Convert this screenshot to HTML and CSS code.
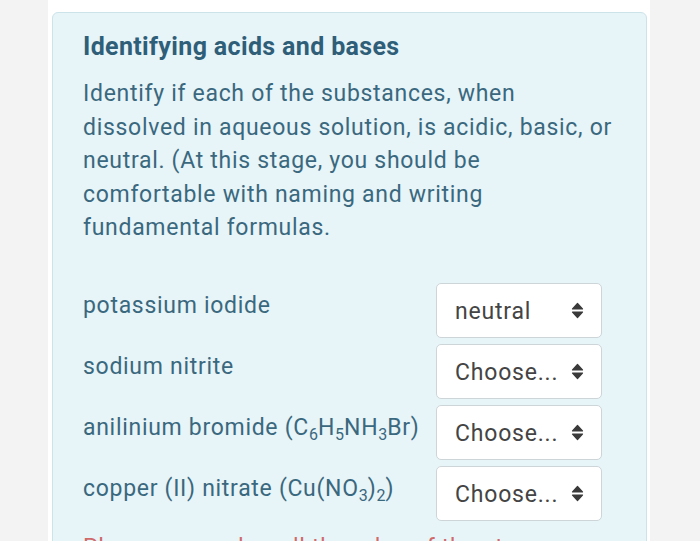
FILE: index.html
```html
<!DOCTYPE html>
<html>
<head>
<meta charset="utf-8">
<link rel="stylesheet" href="styles.css">
</head>
<body>
<div class="page">
  <div class="card">
    <h2 class="title">Identifying acids and bases</h2>
    <p class="intro">Identify if each of the substances, when dissolved in aqueous solution, is acidic, basic, or neutral. (At this stage, you should be comfortable with naming and writing fundamental formulas.</p>
    <div class="rows">
      <div class="row">
        <div class="label">potassium iodide</div>
        <div class="select"><span class="value">neutral</span><svg class="arrows" width="13" height="17" viewBox="0 0 13 17"><path d="M1.5 7 L6.5 1.5 L11.5 7 Z M1.5 10 L6.5 15.5 L11.5 10 Z" fill="#3a3a3a" stroke="#3a3a3a" stroke-width="1.2" stroke-linejoin="round"/></svg></div>
      </div>
      <div class="row">
        <div class="label">sodium nitrite</div>
        <div class="select"><span class="value">Choose...</span><svg class="arrows" width="13" height="17" viewBox="0 0 13 17"><path d="M1.5 7 L6.5 1.5 L11.5 7 Z M1.5 10 L6.5 15.5 L11.5 10 Z" fill="#3a3a3a" stroke="#3a3a3a" stroke-width="1.2" stroke-linejoin="round"/></svg></div>
      </div>
      <div class="row">
        <div class="label">anilinium bromide (C<sub>6</sub>H<sub>5</sub>NH<sub>3</sub>Br)</div>
        <div class="select"><span class="value">Choose...</span><svg class="arrows" width="13" height="17" viewBox="0 0 13 17"><path d="M1.5 7 L6.5 1.5 L11.5 7 Z M1.5 10 L6.5 15.5 L11.5 10 Z" fill="#3a3a3a" stroke="#3a3a3a" stroke-width="1.2" stroke-linejoin="round"/></svg></div>
      </div>
      <div class="row">
        <div class="label">copper (II) nitrate (Cu(NO<sub>3</sub>)<sub>2</sub>)</div>
        <div class="select"><span class="value">Choose...</span><svg class="arrows" width="13" height="17" viewBox="0 0 13 17"><path d="M1.5 7 L6.5 1.5 L11.5 7 Z M1.5 10 L6.5 15.5 L11.5 10 Z" fill="#3a3a3a" stroke="#3a3a3a" stroke-width="1.2" stroke-linejoin="round"/></svg></div>
      </div>
    </div>
    <p class="note">Please remember all the rules of the strong acids</p>
  </div>
</div>
</body>
</html>
```
FILE: styles.css
```css
html, body {
  margin: 0;
  padding: 0;
  background: #f3f3f3;
  height: 541px;
  overflow: hidden;
}
.page {
  margin-left: 48px;
  width: 602px;
  height: 541px;
  overflow: hidden;
  background: #ffffff;
  padding: 12px 3px 0 4px;
  box-sizing: border-box;
}
.card {
  background: #e7f4f8;
  border: 1px solid #cde3ea;
  border-radius: 6px;
  padding: 19px 30px 0 30px;
  height: 600px;
  font-family: Roboto, "Liberation Sans", sans-serif;
}
.title {
  margin: 0;
  font-size: 25px;
  line-height: 30px;
  font-weight: 700;
  letter-spacing: 0.35px;
  color: #2f5f78;
}
.intro {
  margin: 15px 0 0 0;
  font-size: 23px;
  line-height: 33.5px;
  letter-spacing: 0.7px;
  color: #3a687e;
}
.rows {
  margin: 38px 14px 0 0;
  display: flex;
  flex-direction: column;
  gap: 6px;
}
.row {
  display: flex;
  justify-content: space-between;
  align-items: flex-start;
}
.label {
  padding-top: 6px;
  font-size: 23px;
  line-height: 33px;
  letter-spacing: 0.7px;
  color: #3a687e;
  white-space: nowrap;
}
.label sub {
  font-size: 16px;
  line-height: 0;
  vertical-align: -5px;
  letter-spacing: 0;
}
.select {
  width: 166px;
  height: 55px;
  flex: none;
  box-sizing: border-box;
  background: #ffffff;
  border: 1px solid #cdd5d9;
  border-radius: 5px;
  display: flex;
  align-items: center;
  justify-content: space-between;
  padding: 0 17px 0 18px;
}
.value {
  font-size: 23px;
  letter-spacing: 0.8px;
  color: #444444;
  padding-top: 2px;
}
.arrows {
  display: block;
}
.note {
  margin: 10px 0 0 0;
  font-size: 23px;
  line-height: 33.5px;
  letter-spacing: 0.7px;
  color: #d06a6a;
}
```
